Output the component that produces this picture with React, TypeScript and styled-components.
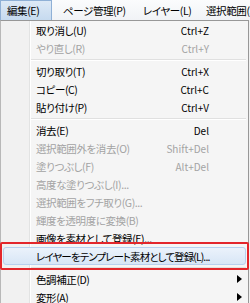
import styled, { createGlobalStyle } from 'styled-components';

const GlobalStyle = createGlobalStyle`
  html, body {
    margin: 0;
    padding: 0;
    background: #ffffff;
  }
  body {
    width: 250px;
    height: 303px;
    overflow: hidden;
    font-family: "Noto Sans CJK JP", "Liberation Sans", sans-serif;
    font-size: 10.5px;
    font-feature-settings: "palt";
    color: #000000;
  }
`;

const Screen = styled.div`
  width: 250px;
  height: 303px;
  overflow: hidden;
  background: #f0f0f0;
`;

const MenuBar = styled.div`
  height: 20px;
  display: flex;
  align-items: stretch;
  background: linear-gradient(#fbfcfd, #f1f3f6);
  white-space: nowrap;
  letter-spacing: -0.4px;
`;

const BarItem = styled.div<{ $active?: boolean; $w?: number }>`
  flex: 0 0 ${p => (p.$w ? `${p.$w}px` : 'auto')};
  display: flex;
  align-items: center;
  box-sizing: border-box;
  padding-left: ${p => (p.$active ? '6px' : '10px')};
  border: 1px solid ${p => (p.$active ? '#8fb0d6' : 'transparent')};
  border-bottom: none;
  background: ${p => (p.$active ? 'linear-gradient(#dde9f6, #c6daef)' : 'transparent')};
`;

const Dropdown = styled.div`
  width: 249px;
  border: 1px solid #979797;
  border-left-color: #b8b8b8;
  background: linear-gradient(to right, #f1f1f1 0, #f1f1f1 28px, #e2e3e3 28px, #e2e3e3 29px, #ffffff 29px, #ffffff 30px, #f5f5f5 30px);
  padding: 0 2px;
  box-sizing: border-box;
  height: 284px;
`;

const Item = styled.div<{ $disabled?: boolean; $selected?: boolean }>`
  position: relative;
  height: 18px;
  display: grid;
  grid-template-columns: 1fr auto 37px;
  align-items: center;
  padding-left: 33px;
  color: ${p => (p.$disabled ? '#a3a3a3' : '#000000')};
  white-space: nowrap;
  border-radius: 3px;
  box-sizing: border-box;
  ${p =>
    p.$selected &&
    `
    background: linear-gradient(#ebf2fb, #d8e6f6);
    border: 1px solid #b8d0ee;
    padding-left: 32px;
    &::before {
      content: '';
      position: absolute;
      top: -6px;
      bottom: -6px;
      left: -4px;
      right: -4px;
      border: 2px solid #e3262b;
      border-radius: 2px;
    }
  `}
`;

const Label = styled.span<{ $tight?: boolean }>`
  letter-spacing: ${p => (p.$tight ? '-0.9px' : '-0.4px')};
`;

const Shortcut = styled.span`
  text-align: right;
  font-size: 10px;
`;

const Arrow = styled.span`
  justify-self: end;
  margin-right: 4px;
  width: 0;
  height: 0;
  border-top: 4px solid transparent;
  border-bottom: 4px solid transparent;
  border-left: 5px solid #000000;
`;

const Separator = styled.div`
  height: 5px;
  margin-left: 28px;
  display: flex;
  align-items: center;
  &::after {
    content: '';
    flex: 1;
    height: 1px;
    background: #e0e0e0;
    border-bottom: 1px solid #ffffff;
  }
`;

type Entry =
  | { sep: true }
  | { label: string; key?: string; disabled?: boolean; selected?: boolean; sub?: boolean; sep?: false };

const entries: Entry[] = [
  { label: '取り消し(U)', key: 'Ctrl+Z' },
  { label: 'やり直し(R)', key: 'Ctrl+Y', disabled: true },
  { sep: true },
  { label: '切り取り(T)', key: 'Ctrl+X' },
  { label: 'コピー(C)', key: 'Ctrl+C' },
  { label: '貼り付け(P)', key: 'Ctrl+V' },
  { sep: true },
  { label: '消去(E)', key: 'Del' },
  { label: '選択範囲外を消去(O)', key: 'Shift+Del', disabled: true },
  { label: '塗りつぶし(F)', key: 'Alt+Del', disabled: true },
  { label: '高度な塗りつぶし(I)...', disabled: true },
  { label: '選択範囲をフチ取り(G)...', disabled: true },
  { label: '輝度を透明度に変換(B)', disabled: true },
  { label: '画像を素材として登録(E)...' },
  { label: 'レイヤーをテンプレート素材として登録(L)...', selected: true },
  { sep: true },
  { label: '色調補正(D)', sub: true },
  { label: '変形(A)', sub: true },
];

const App = () => {
  return (
    <>
      <GlobalStyle />
      <Screen>
        <MenuBar>
          <BarItem $active $w={52}>編集(E)</BarItem>
          <BarItem $w={80}>ページ管理(P)</BarItem>
          <BarItem $w={63}>レイヤー(L)</BarItem>
          <BarItem>選択範囲(S)</BarItem>
        </MenuBar>
        <Dropdown>
          {entries.map((e, i) =>
            e.sep ? (
              <Separator key={i} />
            ) : (
              <Item key={i} $disabled={e.disabled} $selected={e.selected}>
                <Label $tight={e.selected}>{e.label}</Label>
                <Shortcut>{e.key}</Shortcut>
                {e.sub ? <Arrow /> : <span />}
              </Item>
            )
          )}
        </Dropdown>
      </Screen>
    </>
  );
};

export default App;
